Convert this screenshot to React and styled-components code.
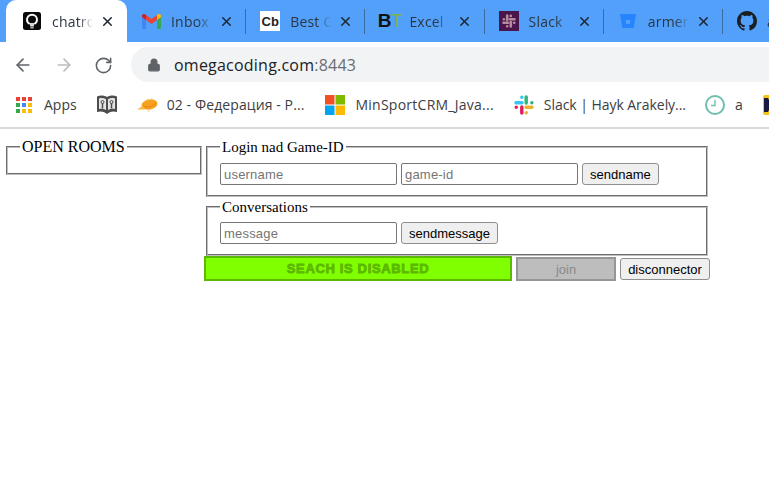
import styled, { createGlobalStyle } from "styled-components";
import { ArrowLeft, ArrowRight, RotateCw, Lock, X } from "lucide-react";

const Global = createGlobalStyle`
  html, body { margin: 0; padding: 0; background: #fff; overflow: hidden; }
  body { width: 769px; height: 478px; font-family: "Liberation Serif", serif; }
`;

const Chrome = styled.div`
  height: 129px;
  border-bottom: 2px solid #d8d9db;
  box-sizing: border-box;
  font-family: "Open Sans", "Noto Sans", sans-serif;
`;

const TabStrip = styled.div`
  height: 42px;
  background: #52a0fa;
  display: flex;
  padding-left: 6px;
  overflow: hidden;
`;

const Tab = styled.div`
  flex: none;
  width: ${(p) => p.$width || 119.2}px;
  height: 42px;
  box-sizing: border-box;
  display: flex;
  align-items: center;
  padding: 0 0 0 ${(p) => (p.$active ? 16 : 14)}px;
  position: relative;
  background: ${(p) => (p.$active ? "#fff" : "transparent")};
  border-radius: ${(p) => (p.$active ? "10px 10px 0 0" : "0")};
  color: #2c3642;
  font-size: 14px;
`;

const Divider = styled.span`
  position: absolute;
  right: 0;
  top: 9px;
  width: 1px;
  height: 25px;
  background: #3c6c9f;
`;

const Fav = styled.span`
  width: 20px;
  height: 20px;
  flex: none;
  display: flex;
  align-items: center;
  justify-content: center;
`;

const TabTitle = styled.span`
  width: 41px;
  margin-left: 10px;
  overflow: hidden;
  white-space: nowrap;
  flex: none;
  letter-spacing: 0.2px;
  -webkit-mask-image: linear-gradient(to right, #000 65%, transparent 100%);
  mask-image: linear-gradient(to right, #000 65%, transparent 100%);
`;

const Close = styled.span`
  margin-left: 7px;
  display: flex;
  color: #1f2a36;
`;

const AddressRow = styled.div`
  height: 42px;
  padding-top: 5px;
  box-sizing: border-box;
  display: flex;
  align-items: flex-start;
  background: #fff;
`;

const NavIcons = styled.div`
  width: 131px;
  flex: none;
  height: 36px;
  display: flex;
  align-items: center;
  gap: 20.5px;
  padding-left: 13px;
  box-sizing: border-box;
`;

const Omnibox = styled.div`
  flex: 1;
  height: 35px;
  background: #f1f3f4;
  border-radius: 18px 0 0 18px;
  display: flex;
  align-items: center;
  padding-left: 16px;
  font-size: 16px;
  letter-spacing: 0.22px;
  color: #202124;
`;

const Host = styled.span`
  margin-left: 13px;
`;

const Port = styled.span`
  color: #6a6d71;
`;

const Bookmarks = styled.div`
  height: 43px;
  padding: 0 0 2px 16px;
  box-sizing: border-box;
  display: flex;
  align-items: center;
  font-size: 14px;
  color: #3c4043;
  white-space: nowrap;
  overflow: hidden;
`;

const Bookmark = styled.div`
  display: flex;
  align-items: center;
  gap: ${(p) => p.$inner ?? 10}px;
  flex: none;
  margin-right: ${(p) => p.$gap ?? 20}px;
  letter-spacing: ${(p) => p.$track ?? 0}px;
`;

const Page = styled.div`
  display: flex;
  align-items: flex-start;
  gap: 4px;
  padding: 9px 0 0 6px;
`;

const Side = styled.div`
  width: 196px;
  flex: none;
`;

const Main = styled.div`
  width: 502px;
  flex: none;
  display: flex;
  flex-direction: column;
`;

const Box = styled.fieldset`
  margin: ${(p) => p.$top || 0}px 0 0;
  padding: 0 12px;
  min-width: 0;
  height: ${(p) => p.$height}px;
  box-sizing: border-box;
  border: 2px groove #c0c0c0;
`;

const Legend = styled.legend`
  font-size: ${(p) => p.$size || 15}px;
  line-height: 18px;
  padding: 0 2px;
  color: #000;
`;

const Row = styled.div`
  display: flex;
  gap: 4px;
  align-items: center;
  margin-top: ${(p) => p.$top || 7}px;
`;

const Field = styled.input`
  width: 177px;
  height: 22px;
  box-sizing: border-box;
  border: 1px solid #767676;
  border-radius: 2px;
  padding: 1px 2px 1px 3px;
  font-family: "Liberation Sans", Arial, sans-serif;
  font-size: 13px;
  letter-spacing: 0.2px;
  background: #fff;
  &::placeholder { color: #757575; opacity: 1; }
`;

const Btn = styled.button`
  height: 22px;
  box-sizing: border-box;
  padding: 0 7px;
  border: 1px solid #8f8f8f;
  border-radius: 3px;
  background: #efefef;
  color: #000;
  font-family: "Liberation Sans", Arial, sans-serif;
  font-size: 13px;
`;

const Actions = styled.div`
  display: flex;
  flex: none;
  width: 510px;
  align-items: flex-start;
  margin-left: -2px;
`;

const Search = styled.div`
  flex: none;
  width: 308px;
  height: 25px;
  box-sizing: border-box;
  background: #80ff00;
  border: 2px solid #5cb800;
  color: #5cb800;
  font-family: "Liberation Sans", Arial, sans-serif;
  font-weight: 700;
  font-size: 13px;
  letter-spacing: 0.65px;
  display: flex;
  align-items: center;
  justify-content: center;
  -webkit-text-stroke: 0.8px #5cb800;
`;

const Join = styled.button`
  flex: none;
  width: 100px;
  height: 24px;
  margin: 1px 0 0 4px;
  box-sizing: border-box;
  border: 2px solid #969696;
  background: #bdbdbd;
  color: #8a8a8a;
  font-family: "Liberation Sans", Arial, sans-serif;
  font-size: 13px;
  padding: 0;
`;

const Disconnect = styled(Btn)`
  flex: none;
  width: 90px;
  margin: 2px 0 0 4px;
  padding: 0;
`;

const CbIcon = styled.span`
  width: 20px;
  height: 20px;
  background: #fff;
  color: #222;
  font: 700 13px "Liberation Sans", sans-serif;
  display: flex;
  align-items: center;
  justify-content: center;
`;

const BtIcon = styled.span`
  font: 700 19px "Liberation Sans", sans-serif;
  color: #111;
  letter-spacing: -1px;
  & > i { color: #7cb342; font-style: normal; font-weight: 400; }
`;

const Bulb = () => (
  <svg width="18" height="18" viewBox="0 0 18 18">
    <rect width="18" height="18" rx="2.500" fill="#0a0a0a" />
    <path d="M6.700 12C5 11 4 9.500 4 7.700a5 5 0 0 1 10 0c0 1.800-1 3.300-2.700 4.300" fill="none" stroke="#fff" strokeWidth="1.900" />
    <path d="M7 11v3.500h4V11z" fill="#d8d8d8" />
    <rect x="7.500" y="15" width="3" height="1.500" fill="#bbb" />
  </svg>
);

const Gmail = () => (
  <svg width="19" height="15" viewBox="0 0 19 15">
    <path d="M0 3v10.500A1.500 1.500 0 0 0 1.500 15H4V6z" fill="#4285f4" />
    <path d="M15 6v9h2.500a1.500 1.500 0 0 0 1.500-1.500V3z" fill="#34a853" />
    <path d="M4 6 9.500 10 15 6V1L9.500 5 4 1z" fill="#ea4335" />
    <path d="M0 3 4 6V1L3 .4C1.500-.6 0 .6 0 2z" fill="#c5221f" />
    <path d="M15 1v5l4-3V2c0-1.400-1.500-2.600-3-1.600z" fill="#fbbc04" />
  </svg>
);

const SlackDark = () => (
  <svg width="20" height="20" viewBox="0 0 20 20">
    <rect width="20" height="20" fill="#4a154b" />
    <g stroke="#b9899f" strokeWidth="2.600" strokeLinecap="round" fill="none">
      <path d="M8.200 4.500v4.500M11.800 11v4.500M4.500 11.800H9M11 8.200h4.500" />
      <path d="M4.800 8.200h.1M15.200 11.800h.1M11.800 4.800v.1M8.200 15.200v.1" />
    </g>
  </svg>
);

const Bitbucket = () => (
  <svg width="18" height="18" viewBox="0 0 18 18">
    <path d="M1 2h16l-2.400 14H3.400z" fill="#2684ff" />
    <path d="M6.500 8h5l-.8 4H7.300z" fill="#82baff" opacity=".55" />
  </svg>
);

const Github = () => (
  <svg width="20" height="20" viewBox="0 0 16 16" fill="#1b1f23">
    <path d="M8 0C3.580 0 0 3.580 0 8c0 3.540 2.290 6.530 5.470 7.590.4.070.55-.17.55-.38 0-.19-.01-.82-.01-1.490-2.010.37-2.530-.49-2.690-.94-.09-.23-.48-.94-.82-1.130-.28-.15-.68-.52-.01-.53.63-.01 1.080.58 1.230.82.720 1.210 1.870.870 2.330.66.070-.52.280-.87.510-1.070-1.780-.2-3.640-.89-3.640-3.950 0-.87.310-1.590.820-2.150-.08-.2-.36-1.020.08-2.120 0 0 .67-.21 2.200.82.640-.18 1.320-.27 2-.27s1.360.09 2 .27c1.530-1.040 2.200-.82 2.200-.82.440 1.100.16 1.920.08 2.120.51.560.82 1.270.82 2.150 0 3.070-1.870 3.750-3.650 3.950.29.25.54.730.54 1.480 0 1.070-.01 1.930-.01 2.200 0 .21.150.46.550.38A8.010 8.010 0 0 0 16 8c0-4.420-3.580-8-8-8z" />
  </svg>
);

const AppsGrid = () => {
  const colors = ["#ea4335", "#ea4335", "#ea4335", "#34a853", "#4285f4", "#fbbc04", "#34a853", "#fbbc04", "#fbbc04"];
  return (
    <svg width="16" height="16" viewBox="0 0 16 16">
      {colors.map((c, i) => (
        <rect key={i} x={(i % 3) * 6} y={Math.floor(i / 3) * 6} width="4" height="4" fill={c} />
      ))}
    </svg>
  );
};

const BookIcon = () => (
  <svg width="20" height="19" viewBox="0 0 20 19">
    <path d="M0 1.500c3-1.500 7-1.500 10 .5 3-2 7-2 10-.5V17c-3-1-7-1-10 2-3-3-7-3-10-2z" fill="#4d4d4d" />
    <path d="M2 3.500c2.500-.8 5-.4 7 .8v10.700c-2-1.200-4.500-1.600-7-1zM18 3.500c-2.500-.8-5-.4-7 .8v10.700c2-1.200 4.500-1.600 7-1z" fill="#e4e4e4" />
    <path d="M5.500 8v5.500M14.500 8v5.500" stroke="#4d4d4d" strokeWidth="1.500" />
    <circle cx="5.500" cy="7" r="1.500" fill="none" stroke="#4d4d4d" />
    <circle cx="14.500" cy="7" r="1.500" fill="none" stroke="#4d4d4d" />
  </svg>
);

const Zeppelin = () => (
  <svg width="21" height="16" viewBox="0 0 21 16">
    <ellipse cx="12.500" cy="7.500" rx="8" ry="5" fill="#f7a11f" transform="rotate(-10 12.500 7.500)" />
    <path d="M0 12.500l6-4 2 4z" fill="#f8b64c" />
    <path d="M6 9c4 2 9 1 13-3" stroke="#e8830f" fill="none" />
    <path d="M10 1.500l1 2M15 1l-.5 2M11 12l1 3" stroke="#f6c9a5" />
  </svg>
);

const Windows = () => (
  <svg width="20" height="20" viewBox="0 0 20 20">
    <rect width="9.500" height="9.500" fill="#f25022" />
    <rect x="10.500" width="9.500" height="9.500" fill="#7fba00" />
    <rect y="10.500" width="9.500" height="9.500" fill="#00a4ef" />
    <rect x="10.500" y="10.500" width="9.500" height="9.500" fill="#ffb900" />
  </svg>
);

const SlackColor = () => (
  <svg width="20" height="20" viewBox="0 0 20 20" strokeWidth="3.400" strokeLinecap="round" fill="none">
    <path d="M2 7.800h6M7.800 2.200h.1" stroke="#36c5f0" />
    <path d="M12.200 2v6M17.800 7.800h.1" stroke="#2eb67d" />
    <path d="M18 12.200h-6M12.200 17.800h.1" stroke="#ecb22e" />
    <path d="M7.800 18v-6M2.200 12.200h.1" stroke="#e01e5a" />
  </svg>
);

const ClockIcon = () => (
  <svg width="20" height="20" viewBox="0 0 20 20" fill="none" stroke="#6fbfae" strokeWidth="2">
    <circle cx="10" cy="10" r="9" />
    <path d="M10 5v5.500H6" strokeWidth="1.400" />
  </svg>
);

const YellowIcon = () => (
  <svg width="20" height="20" viewBox="0 0 20 20">
    <rect width="20" height="20" rx="2" fill="#f5c518" />
    <path d="M1 3h4l4 7-4 7H1zM19 3h-4l-4 7 4 7h4z" fill="#1a1a40" />
  </svg>
);

const tabs = [
  { title: "chatroom", icon: <Bulb />, active: true, width: 121 },
  { title: "Inbox (1)", icon: <Gmail /> },
  { title: "Best Crypto", icon: <CbIcon>Cb</CbIcon> },
  { title: "Excel Tools", icon: <BtIcon>B<i>T</i></BtIcon> },
  { title: "Slack | Hayk", icon: <SlackDark /> },
  { title: "armen-code", icon: <Bitbucket /> },
];

export default function App() {
  return (
    <>
      <Global />
      <Chrome>
        <TabStrip>
          {tabs.map((t) => (
            <Tab key={t.title} $active={t.active} $width={t.width}>
              <Fav>{t.icon}</Fav>
              <TabTitle>{t.title}</TabTitle>
              <Close><X size={15} strokeWidth={2.500} /></Close>
              {!t.active && <Divider />}
            </Tab>
          ))}
          <Tab>
            <Fav><Github /></Fav>
            <TabTitle>armen</TabTitle>
          </Tab>
        </TabStrip>
        <AddressRow>
          <NavIcons>
            <ArrowLeft size={20} color="#5f6368" />
            <ArrowRight size={20} color="#bcbdc0" />
            <RotateCw size={19} color="#5f6368" />
          </NavIcons>
          <Omnibox>
            <Lock size={14} color="#5f6368" fill="#5f6368" />
            <Host>omegacoding.com<Port>:8443</Port></Host>
          </Omnibox>
        </AddressRow>
        <Bookmarks>
          <Bookmark $inner={12}><AppsGrid />Apps</Bookmark>
          <Bookmark><BookIcon /></Bookmark>
          <Bookmark $inner={9} $gap={21} $track={0.1}><Zeppelin />02 - Федерация - Р...</Bookmark>
          <Bookmark $gap={20} $track={0.25}><Windows />MinSportCRM_Java...</Bookmark>
          <Bookmark $gap={19} $track={-0.05}><SlackColor />Slack | Hayk Arakely...</Bookmark>
          <Bookmark><ClockIcon />a</Bookmark>
          <Bookmark><YellowIcon /></Bookmark>
        </Bookmarks>
      </Chrome>
      <Page>
        <Side>
          <Box $height={37}>
            <Legend $size={16}>OPEN ROOMS</Legend>
          </Box>
        </Side>
        <Main>
          <Box $height={59}>
            <Legend>Login nad Game-ID</Legend>
            <Row>
              <Field placeholder="username" />
              <Field placeholder="game-id" />
              <Btn>sendname</Btn>
            </Row>
          </Box>
          <Box $height={58} $top={1}>
            <Legend>Conversations</Legend>
            <Row $top={6}>
              <Field placeholder="message" />
              <Btn>sendmessage</Btn>
            </Row>
          </Box>
          <Actions>
            <Search>SEACH IS DISABLED</Search>
            <Join disabled>join</Join>
            <Disconnect>disconnector</Disconnect>
          </Actions>
        </Main>
      </Page>
    </>
  );
}
